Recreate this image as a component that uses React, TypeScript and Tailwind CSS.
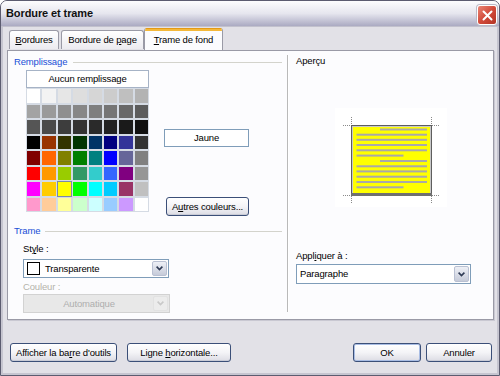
import React from "react";

const palette: string[][] = [
  ["#ffffff", "#f3f3f3", "#e6e6e6", "#dedede", "#d6d6d6", "#cccccc", "#bfbfbf", "#b3b3b3"],
  ["#a3a3a3", "#9a9a9a", "#8f8f8f", "#878787", "#7f7f7f", "#757575", "#686868", "#5c5c5c"],
  ["#555555", "#4a4a4a", "#3d3d3d", "#333333", "#2a2a2a", "#222222", "#1a1a1a", "#101010"],
  ["#000000", "#993300", "#333300", "#003300", "#003366", "#000080", "#333399", "#333333"],
  ["#800000", "#ff6600", "#808000", "#008000", "#008080", "#0000ff", "#666699", "#808080"],
  ["#ff0000", "#ff9900", "#99cc00", "#339966", "#33cccc", "#3366ff", "#800080", "#969696"],
  ["#ff00ff", "#ffcc00", "#ffff00", "#00ff00", "#00ffff", "#00ccff", "#993366", "#c0c0c0"],
  ["#ff99cc", "#ffcc99", "#ffff99", "#ccffcc", "#ccffff", "#99ccff", "#cc99ff", "#ffffff"],
];

function Arrow({ disabled }: { disabled?: boolean }) {
  return (
    <div
      className={
        disabled
          ? "w-[15px] h-full flex items-center justify-center rounded-[2px] border border-[#e2e2e2] bg-[#ececec]"
          : "w-[15px] h-full flex items-center justify-center rounded-[2px] border border-[#b9c0d2] bg-gradient-to-b from-[#eef0f6] to-[#c6cbd9]"
      }
    >
      <svg width="7" height="5" viewBox="0 0 7 5">
        <path
          d="M0.6 0.6 L3.5 3.6 L6.4 0.6"
          stroke={disabled ? "#c9c9c9" : "#2f3b55"}
          strokeWidth="1.6"
          fill="none"
        />
      </svg>
    </div>
  );
}

function XPButton({ children, w, def }: { children: React.ReactNode; w: string; def?: boolean }) {
  return (
    <div
      className={`${w} h-[19px] flex items-center justify-center rounded-[3px] border border-[#3b4f78] bg-gradient-to-b from-white via-[#f4f4f7] to-[#dcdce4] ${
        def ? "shadow-[inset_0_0_0_1px_#a9bde4]" : "shadow-[inset_0_-1px_0_#c9cbd6]"
      }`}
    >
      {children}
    </div>
  );
}

function Legend({ label, lineMl }: { label: string; lineMl: string }) {
  return (
    <div className="flex items-center h-[12px]">
      <span className="text-[#1a4fd6]">{label}</span>
      <div className={`flex-1 h-px bg-[#d3d3cc] ${lineMl} mr-[5px]`} />
    </div>
  );
}

function Preview() {
  const lines: [number, number, number][] = [
    [45, 92, 21.5],
    [21.5, 92, 26.7],
    [21.5, 92, 31.8],
    [21.5, 92, 37],
    [21.5, 92, 42.3],
    [21.5, 68.5, 47.6],
    [45, 92, 53],
    [21.5, 92, 58.3],
    [21.5, 92, 63.4],
    [21.5, 92, 68.7],
    [21.5, 92, 74],
    [21.5, 68.5, 79.3],
  ];
  const dash = "#8a8a8a";
  return (
    <svg width="112" height="99" viewBox="0 0 112 99">
      <rect x="0" y="0" width="112" height="99" fill="#ffffff" />
      <g stroke={dash} strokeWidth="1" strokeDasharray="1 1">
        <line x1="8" y1="17.5" x2="16" y2="17.5" />
        <line x1="16.5" y1="9" x2="16.5" y2="17" />
        <line x1="97" y1="17.5" x2="105" y2="17.5" />
        <line x1="96.5" y1="9" x2="96.5" y2="17" />
        <line x1="8" y1="87.5" x2="16" y2="87.5" />
        <line x1="16.5" y1="88" x2="16.5" y2="96" />
        <line x1="97" y1="87.5" x2="105" y2="87.5" />
        <line x1="96.5" y1="88" x2="96.5" y2="96" />
      </g>
      <rect x="16" y="17" width="81" height="71" fill="#5e5e5e" />
      <rect x="17" y="18" width="79" height="68" fill="#c8c8c8" />
      <rect x="18" y="19" width="77" height="66" fill="#ffff00" />
      <rect x="16" y="85" width="81" height="3" fill="#707070" />
      {lines.map(([x1, x2, y], i) => (
        <rect key={i} x={x1} y={y - 1} width={x2 - x1} height="2" fill="#a9a9a9" />
      ))}
    </svg>
  );
}

export default function App() {
  return (
    <div className="w-[500px] h-[376px] overflow-hidden bg-white font-['Liberation_Sans',Arial,sans-serif] text-[9.5px] tracking-[-0.15px] text-black leading-none">
      <div className="w-[500px] h-[376px] flex flex-col border border-[#5c5c70] rounded-t-[7px] bg-[#e2e1e7] overflow-hidden">
        {/* Title bar */}
        <div className="h-[26px] shrink-0 flex items-center justify-between pl-[5px] pr-[2px] bg-gradient-to-b from-[#fdfdfe] via-[#e6e6ee] to-[#abaac2] border-b border-[#c2c1cd]">
          <span className="text-[11px] font-bold tracking-[-0.1px] text-[#111] pb-[1px]">Bordure et trame</span>
          <div className="w-[20px] h-[20px] mt-[3px] rounded-[3px] border border-white bg-gradient-to-br from-[#e98575] via-[#d24a3a] to-[#b33324] flex items-center justify-center shadow-[0_0_0_1px_#b9b9c6]">
            <svg width="11" height="11" viewBox="0 0 11 11">
              <path d="M1.5 1.5 L9.5 9.5 M9.5 1.5 L1.5 9.5" stroke="#ffffff" strokeWidth="2" strokeLinecap="round" />
            </svg>
          </div>
        </div>

        {/* Body */}
        <div className="flex-1 flex flex-col border-x-2 border-b-2 border-[#c6c5d0] pl-[4px] pr-[3px]">
          {/* Tabs */}
          <div className="h-[23px] flex items-end pl-[2px] relative z-10">
            <div className="w-[50px] h-[19px] mb-px flex items-center justify-center border border-b-0 border-[#9a9aa6] rounded-t-[3px] bg-gradient-to-b from-white to-[#ecebf0]">
              <span><span className="underline">B</span>ordures</span>
            </div>
            <div className="w-[83px] h-[19px] mb-px ml-[2px] flex items-center justify-center border border-b-0 border-[#9a9aa6] rounded-t-[3px] bg-gradient-to-b from-white to-[#ecebf0]">
              <span>Bordure de <span className="underline">p</span>age</span>
            </div>
            <div className="w-[79px] h-[22px] flex flex-col border-x border-[#9a9aa6] rounded-t-[3px] bg-[#fcfcfe] overflow-hidden">
              <div className="h-[3px] bg-[#f4b83a] border-t border-[#e49a16]" />
              <div className="flex-1 flex items-center justify-center pb-[1px]">
                <span><span className="underline">T</span>rame de fond</span>
              </div>
            </div>
          </div>

          {/* Panel */}
          <div className="h-[270px] flex border border-[#9a9aa6] bg-[#fcfcfe] shadow-[1px_1px_0_#c9c8d2]">
            {/* Left */}
            <div className="w-[279px] flex flex-col pl-[6px] pt-[5px]">
              <Legend label="Remplissage" lineMl="ml-[6px]" />
              <div className="flex mt-[2px] ml-[12px]">
                <div className="w-[123px] flex flex-col">
                  <div className="h-[18px] flex items-center justify-center bg-white border border-[#a6b3c6]">
                    Aucun remplissage
                  </div>
                  <div className="grid grid-cols-8 gap-[2px] p-[1px] bg-[#d5dbe4]">
                    {palette.flat().map((c, i) => (
                      <div
                        key={i}
                        className={i === 50 ? "h-[13.5px] outline outline-1 outline-[#7a8aa8]" : "h-[13.5px]"}
                        style={{ backgroundColor: c }}
                      />
                    ))}
                  </div>
                </div>
                <div className="w-[85px] ml-[15px] flex flex-col items-end">
                  <div className="w-[85px] h-[18px] mt-[59px] flex items-center justify-center bg-white border border-[#7f9db9]">
                    Jaune
                  </div>
                  <div className="mt-[50px]">
                    <XPButton w="w-[83px]">
                      <span>A<span className="underline">u</span>tres couleurs...</span>
                    </XPButton>
                  </div>
                </div>
              </div>

              <div className="mt-[9px]">
                <Legend label="Trame" lineMl="ml-[5px]" />
              </div>
              <div className="ml-[9px] mt-[6px] h-[12px] flex items-center">
                <span>St<span className="underline">y</span>le :</span>
              </div>
              <div className="ml-[9px] mt-[4px] w-[146px] h-[19px] flex items-center bg-white border border-[#7f9db9] p-[1px]">
                <div className="w-[13px] h-[13px] ml-[2px] border border-black bg-white" />
                <span className="ml-[5px] flex-1">Transparente</span>
                <Arrow />
              </div>
              <div className="ml-[9px] mt-[3px] h-[12px] flex items-center text-[#b4b3ab]">Couleur :</div>
              <div className="ml-[9px] mt-[1px] w-[147px] h-[19px] flex items-center bg-[#e8e8e8] border border-[#d2d2d2] p-[1px]">
                <span className="flex-1 text-center text-[#aeaeae]">Automatique</span>
                <Arrow disabled />
              </div>
            </div>

            {/* Separator */}
            <div className="w-px bg-[#b9b9b9] mt-[4px] mb-[7px] shadow-[1px_0_0_#ffffff]" />

            {/* Right */}
            <div className="flex-1 flex flex-col pl-[8px] pt-[4px]">
              <div className="h-[12px] flex items-center">Aperçu</div>
              <div className="ml-[39px] mt-[41px]">
                <Preview />
              </div>
              <div className="mt-[43px] h-[12px] flex items-center">
                <span>Appl<span className="underline">i</span>quer à :</span>
              </div>
              <div className="mt-[2px] w-[175px] h-[20px] flex items-center bg-white border border-[#7f9db9] p-[1px]">
                <span className="ml-[2px] flex-1">Paragraphe</span>
                <Arrow />
              </div>
            </div>
          </div>

          {/* Footer */}
          <div className="flex items-center mt-[23px] pl-[3px] pr-[2px]">
            <XPButton w="w-[107px]">
              <span>Afficher la ba<span className="underline">r</span>re d'outils</span>
            </XPButton>
            <div className="ml-[10px]">
              <XPButton w="w-[104px]">
                <span>Ligne <span className="underline">h</span>orizontale...</span>
              </XPButton>
            </div>
            <div className="flex-1" />
            <XPButton w="w-[68px]" def>
              <span>OK</span>
            </XPButton>
            <div className="ml-[5px]">
              <XPButton w="w-[66px]">
                <span>Annuler</span>
              </XPButton>
            </div>
          </div>
        </div>
      </div>
    </div>
  );
}
